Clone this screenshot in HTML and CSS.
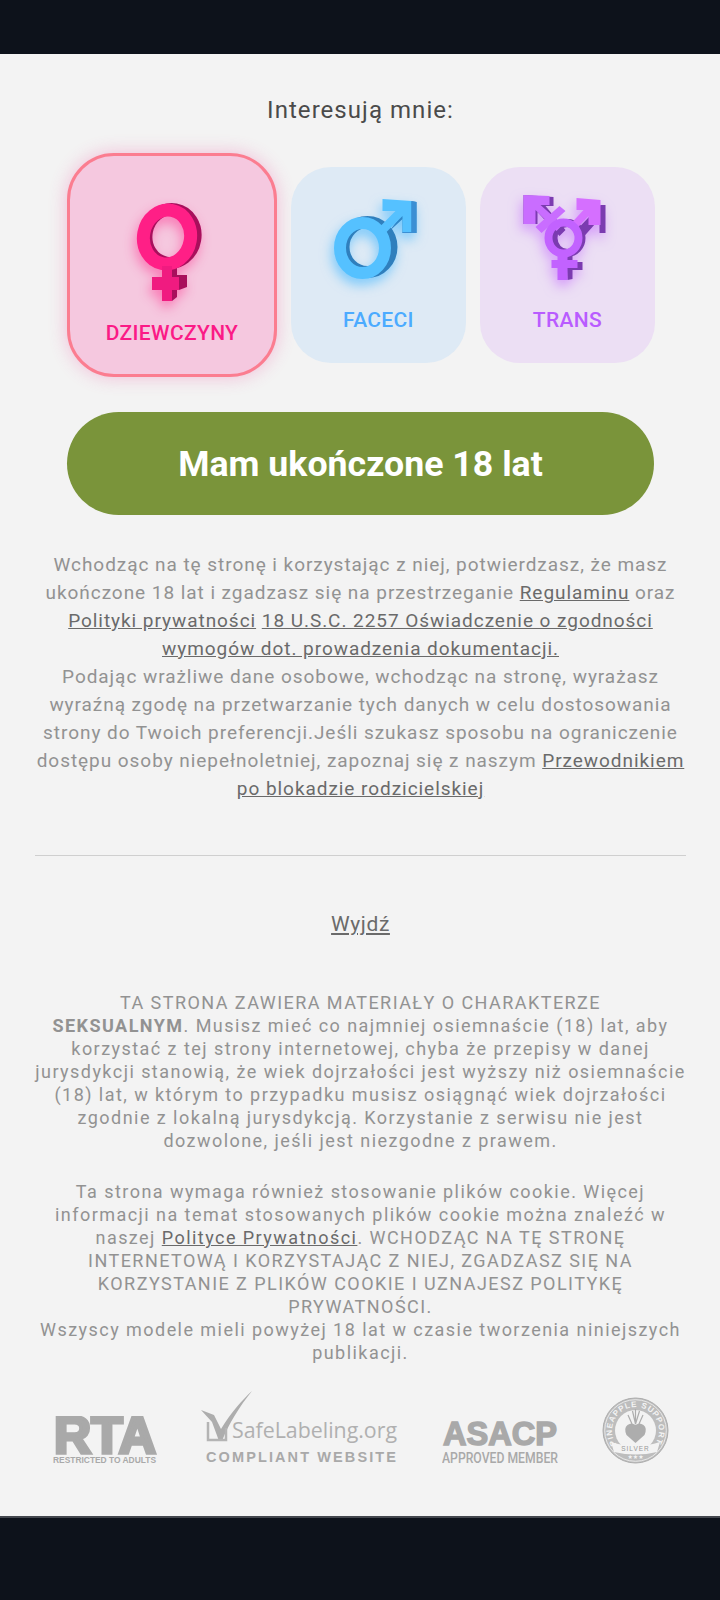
FILE: index.html
```html
<!DOCTYPE html>
<html lang="pl">
<head>
<meta charset="utf-8">
<title>Interesują mnie</title>
<link rel="stylesheet" href="styles.css">
</head>
<body>
<header class="bar-top"></header>
<main class="panel">
  <h1 class="title">Interesują mnie:</h1>
  <div class="cards">
    <div class="card card-f">
      <svg class="icon glow-f" width="90" height="115" viewBox="127 195 90 115">
        <ellipse cx="171" cy="236" rx="24.500" ry="27" fill="none" stroke="#a80f5c" stroke-width="12" transform="rotate(10 171 236)"/>
        <path fill="#a80f5c" d="M172 266l5-5v14h10v12l-8 3h-2v7l-5 4z"/>
        <ellipse cx="167" cy="237" rx="23.500" ry="27" fill="none" stroke="#ff1f86" stroke-width="13" transform="rotate(10 167 237)"/>
        <path fill="#f01b80" d="M162 266h10v11h7v13h-7v11h-10v-11h-10v-13h10z"/>
      </svg>
      <span class="label">DZIEWCZYNY</span>
    </div>
    <div class="card card-m">
      <svg class="icon glow-m" width="90" height="90" viewBox="333.500 195 90 90">
        <path fill="#2f86c9" d="M388 232l14-13v14h14v-31l-6-1v4l-5 5z"/>
        <ellipse cx="367" cy="247" rx="24" ry="25" fill="none" stroke="#2f7fbd" stroke-width="12"/>
        <ellipse cx="362" cy="248" rx="22.500" ry="25" fill="none" stroke="#55c1ff" stroke-width="12"/>
        <path fill="#55c1ff" d="M382 199l29 2v31h-9v-16l-16 16-6-6 15-15h-13z"/>
        <path fill="#3b8fd4" d="M411 201l5 1v31h-14v-1h9z"/>
      </svg>
      <span class="label">FACECI</span>
    </div>
    <div class="card card-t">
      <svg class="icon glow-t" width="90" height="92" viewBox="522.500 192 90 92">
        <g fill="#7b3bb0">
          <path d="M523 195l30 2v9h-8l20 24-6 6-22-24v12h-14z"/>
          <path d="M576 230l24-25h5v28h-6v-14l-16 18z"/>
          <ellipse cx="567" cy="238" rx="14" ry="15" fill="none" stroke="#7b3bb0" stroke-width="8"/>
          <path d="M566 256h6v6h10v8h-10v9l-5 1z"/>
        </g>
        <path fill="#c96dff" d="M523 195l26 1v9h-9l10 9 9-8 6 5-9 8 6 6-6 6-6-6-9 8-6-6 9-8-9-9v14h-12z"/>
        <path fill="#d56fff" d="M576 198l24 2v25h-12v-9l-13 14-5-6 13-14h-7z"/>
        <ellipse cx="563" cy="238" rx="15" ry="15.500" fill="none" stroke="#c262ff" stroke-width="8"/>
        <path fill="#c262ff" d="M557 256h10v4h10v8h-10v12h-10v-12h-6v-8h6z"/>
      </svg>
      <span class="label">TRANS</span>
    </div>
  </div>
  <button class="cta" type="button">Mam ukończone 18 lat</button>
  <p class="notice">Wchodząc na tę stronę i korzystając z niej, potwierdzasz, że masz ukończone 18 lat i zgadzasz się na przestrzeganie <a href="#">Regulaminu</a> oraz <a href="#">Polityki prywatności</a> <a href="#">18 U.S.C. 2257 Oświadczenie o zgodności wymogów dot. prowadzenia dokumentacji.</a><br>Podając wrażliwe dane osobowe, wchodząc na stronę, wyrażasz wyraźną zgodę na przetwarzanie tych danych w celu dostosowania strony do Twoich preferencji.Jeśli szukasz sposobu na ograniczenie dostępu osoby niepełnoletniej, zapoznaj się z naszym <a href="#">Przewodnikiem po blokadzie rodzicielskiej</a></p>
  <hr class="rule">
  <a class="exit" href="#">Wyjdź</a>
  <div class="legal">
    <p>TA STRONA ZAWIERA MATERIAŁY O CHARAKTERZE<br><b>SEKSUALNYM</b>. Musisz mieć co najmniej osiemnaście (18) lat, aby korzystać z tej strony internetowej, chyba że przepisy w danej jurysdykcji stanowią, że wiek dojrzałości jest wyższy niż osiemnaście (18) lat, w którym to przypadku musisz osiągnąć wiek dojrzałości zgodnie z lokalną jurysdykcją. Korzystanie z serwisu nie jest dozwolone, jeśli jest niezgodne z prawem.</p>
    <p>Ta strona wymaga również stosowanie plików cookie. Więcej informacji na temat stosowanych plików cookie można znaleźć w naszej <a href="#">Polityce Prywatności</a>. WCHODZĄC NA TĘ STRONĘ INTERNETOWĄ I KORZYSTAJĄC Z NIEJ, ZGADZASZ SIĘ NA KORZYSTANIE Z PLIKÓW COOKIE I UZNAJESZ POLITYKĘ PRYWATNOŚCI.<br>Wszyscy modele mieli powyżej 18 lat w czasie tworzenia niniejszych publikacji.</p>
  </div>
  <div class="logos">
    <svg width="104" height="48" viewBox="0 0 104 48">
      <text class="lg-rta" x="1" y="37" textLength="102" lengthAdjust="spacingAndGlyphs">RTA</text>
      <text class="lg-small" x="0" y="47" textLength="103" lengthAdjust="spacingAndGlyphs">RESTRICTED TO ADULTS</text>
    </svg>
    <svg width="198" height="73" viewBox="0 0 198 73">
      <path class="lg-fill" d="M0 19l13 5 7 14C29 23 41 9 51 0 39 15 28 32 21 50h-3L11 31z"/>
      <path class="lg-line" d="M7 31v18h18v-12"/>
      <text class="lg-serif" x="31" y="47" textLength="165" lengthAdjust="spacingAndGlyphs">SafeLabeling.org</text>
      <text class="lg-wide" x="5" y="71" textLength="190" lengthAdjust="spacing">COMPLIANT WEBSITE</text>
    </svg>
    <svg width="116" height="43" viewBox="0 0 116 43">
      <text class="lg-asacp" x="1" y="24" textLength="114" lengthAdjust="spacingAndGlyphs">ASACP</text>
      <text class="lg-approved" x="0" y="42" textLength="116" lengthAdjust="spacingAndGlyphs">APPROVED MEMBER</text>
    </svg>
    <svg width="67" height="67" viewBox="0 0 67 67">
      <circle class="lg-disc" cx="33.500" cy="33.500" r="32.500"/>
      <circle class="lg-edge" cx="33.500" cy="33.500" r="30.800"/>
      <circle class="lg-inner" cx="33.500" cy="33.500" r="20.500"/>
      <path id="arc" class="lg-none" d="M14.250 47A23.500 23.500 0 1 1 52.750 47"/>
      <text class="lg-arc"><textPath href="#arc" textLength="100">PINEAPPLE SUPPORT</textPath></text>
      <path class="lg-ribbon" d="M9 45q24.500 8 49 0l-3 10q-21 5-43 0z"/>
      <text class="lg-silver" x="33.500" y="54" text-anchor="middle">SILVER</text>
      <text class="lg-stars" x="33.500" y="62" text-anchor="middle">★★★</text>
      <path class="lg-fill" d="M33.500 46l-9-8q-3-7 1-10 4-3 8 0 4-3 8 0 4 3 1 10z"/>
      <path class="lg-line-thin" d="M33.500 27l-3-13M33.500 27l4-13M33.500 27v-15M30 27l-4-9M37 27l4-9"/>
    </svg>
  </div>
</main>
<footer class="bar-bottom"></footer>
</body>
</html>
```
FILE: styles.css
```css
* { box-sizing: border-box; }
html, body { margin: 0; padding: 0; }
body {
  width: 720px;
  height: 1600px;
  background: #0d121b;
  font-family: Roboto, "Liberation Sans", sans-serif;
  display: flex;
  flex-direction: column;
  overflow: hidden;
}
.bar-top { height: 54px; background: #0d121b; flex: none; }
.panel {
  height: 1464px;
  flex: none;
  background: #f3f3f3;
  border-bottom: 2px solid #43474e;
  padding: 0 34px 0 35px;
  display: flex;
  flex-direction: column;
  align-items: stretch;
}
.bar-bottom { flex: 1; background: #0d121b; }
.title {
  margin: 42px 0 0;
  font-size: 24px;
  line-height: 28px;
  font-weight: 400;
  letter-spacing: 1.05px;
  color: #4a4a4a;
  text-align: center;
}
.cards {
  margin: 29px 32px 0;
  display: flex;
  gap: 14px;
  align-items: center;
}
.card {
  width: 175px;
  height: 196px;
  border-radius: 40px;
  display: flex;
  flex-direction: column;
  align-items: center;
  flex: none;
}
.card-m { background: #deeaf5; padding-top: 28px; }
.card-t { background: #ecdff4; padding-top: 25px; }
.card-f {
  width: 210px;
  height: 224px;
  border: 3px solid #fb7d90;
  background: #f5c8df;
  border-radius: 47px;
  padding-top: 39px;
  box-shadow: 0 0 18px rgba(240, 60, 150, 0.3);
}
.icon { display: block; flex: none; }
.glow-f { filter: drop-shadow(-2px 6px 6px rgba(255, 30, 134, 0.45)); }
.glow-m { filter: drop-shadow(-2px 6px 6px rgba(60, 180, 255, 0.6)); }
.glow-t { filter: drop-shadow(-2px 6px 6px rgba(190, 90, 255, 0.5)); }
.label { font-size: 21px; line-height: 24px; font-weight: 500; letter-spacing: 0.35px; }
.card-f .label { color: #fb1a86; margin-top: 11px; }
.card-m .label { color: #4cabff; margin-top: 23px; }
.card-t .label { color: #b95cff; margin-top: 24px; }
.cta {
  margin: 35px 32px 0;
  height: 103px;
  border: 0;
  border-radius: 52px;
  background: #7a943a;
  color: #fff;
  font-family: inherit;
  font-size: 35.700px;
  font-weight: 700;
}
.notice {
  margin: 36px 0 0;
  font-size: 19px;
  line-height: 28px;
  letter-spacing: 0.95px;
  color: #929292;
  text-align: center;
}
a { color: #6a6a6a; text-decoration: underline; }
.rule { width: 100%; margin: 52px 0 0; border: 0; border-top: 1px solid #cfcfcf; }
.exit { margin-top: 55px; align-self: center; font-size: 21px; line-height: 26px; letter-spacing: 0.6px; }
.legal { margin-top: 54px; font-size: 18px; line-height: 23px; letter-spacing: 1.45px; color: #929292; text-align: center; }
.legal p { margin: 0 0 28px; }
.legal p:last-child { margin-bottom: 0; }
.logos {
  margin-top: 27px;
  padding: 0 17px 0 18px;
  display: flex;
  justify-content: space-between;
  align-items: flex-end;
}
.logos svg { display: block; flex: none; }
.lg-rta { font: 700 52px "Liberation Sans", sans-serif; fill: #a9a9a9; stroke: #a9a9a9; stroke-width: 3.500px; }
.lg-small { font: 700 9.500px "Liberation Sans", sans-serif; fill: #a9a9a9; }
.lg-fill { fill: #adadad; }
.lg-line { fill: none; stroke: #b4b4b4; stroke-width: 2.500px; }
.lg-line-thin { fill: none; stroke: #adadad; stroke-width: 1.200px; }
.lg-serif { font: 400 22px "Open Sans", sans-serif; fill: #b0b0b0; }
.lg-wide { font: 700 14.500px "Liberation Sans", sans-serif; fill: #a9a9a9; }
.lg-asacp { font: 700 33px "Liberation Sans", sans-serif; fill: #a9a9a9; stroke: #a9a9a9; stroke-width: 1.500px; }
.lg-approved { font: 500 14px Roboto, sans-serif; fill: #a9a9a9; }
.lg-disc { fill: #bdbdbd; stroke: #adadad; stroke-width: 1px; }
.lg-edge { fill: none; stroke: #f3f3f3; stroke-width: 0.800px; }
.lg-inner { fill: #f3f3f3; }
.lg-none { fill: none; }
.lg-arc { font: 700 8px "Liberation Sans", sans-serif; fill: #f3f3f3; }
.lg-ribbon { fill: #f3f3f3; }
.lg-silver { font: 400 6.500px "Liberation Sans", sans-serif; fill: #999; letter-spacing: 1px; }
.lg-stars { font: 400 6px "DejaVu Sans", sans-serif; fill: #f3f3f3; }
```
